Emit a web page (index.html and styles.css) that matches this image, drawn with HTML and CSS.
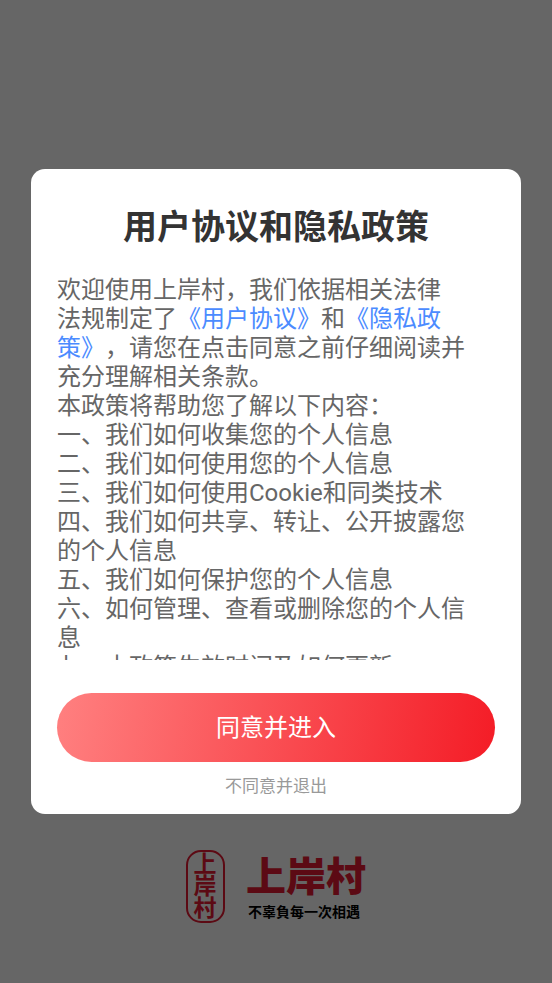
FILE: index.html
```html
<!DOCTYPE html>
<html lang="zh-CN">
<head>
<meta charset="utf-8">
<meta name="viewport" content="width=device-width, initial-scale=1">
<title>上岸村</title>
<link rel="stylesheet" href="styles.css">
</head>
<body>
<div class="splash">
  <svg class="brand" viewBox="0 0 182 76" role="img" aria-label="上岸村 不辜負每一次相遇">
    <rect class="seal" x="2" y="2" width="37" height="71" rx="14"/>
    <g class="seal-text">
      <text x="20" y="23">上</text>
      <text x="20" y="45">岸</text>
      <text x="20" y="67">村</text>
    </g>
    <text class="wordmark" x="61" y="42">上岸村</text>
    <text class="slogan" x="63" y="68">不辜負每一次相遇</text>
  </svg>
</div>
<div class="overlay">
  <main class="dialog" role="dialog" aria-modal="true" aria-labelledby="title">
    <h1 class="title" id="title">用户协议和隐私政策</h1>
    <div class="content">
      <p>欢迎使用上岸村，我们依据相关法律<br>法规制定了<a href="#agreement">《用户协议》</a>和<a href="#privacy">《隐私政<br>策》</a>，请您在点击同意之前仔细阅读并充分理解相关条款。</p>
      <p>本政策将帮助您了解以下内容：</p>
      <p>一、我们如何收集您的个人信息</p>
      <p>二、我们如何使用您的个人信息</p>
      <p>三、我们如何使用Cookie和同类技术</p>
      <p>四、我们如何共享、转让、公开披露您的个人信息</p>
      <p>五、我们如何保护您的个人信息</p>
      <p>六、如何管理、查看或删除您的个人信息</p>
      <p>七、本政策生效时间及如何更新</p>
    </div>
    <button class="accept" type="button">同意并进入</button>
    <button class="decline" type="button">不同意并退出</button>
  </main>
</div>
</body>
</html>
```

FILE: styles.css
```css
* {
  box-sizing: border-box;
}

body {
  margin: 0;
  background: #fff;
  font-family: Roboto, "Noto Sans CJK SC", sans-serif;
  text-spacing-trim: space-all;
}

.splash {
  display: flex;
  justify-content: center;
  align-items: flex-end;
  min-height: 100vh;
  padding-bottom: 58px;
}

.brand {
  width: 182px;
  height: 76px;
  overflow: visible;
  font-family: "Noto Sans CJK SC", sans-serif;
}

.seal {
  fill: none;
  stroke: #e61a32;
  stroke-width: 2;
}

.seal-text {
  fill: #e61a32;
  font-size: 23px;
  font-weight: 700;
  text-anchor: middle;
}

.wordmark {
  fill: #e61a32;
  font-size: 40px;
  font-weight: 900;
}

.slogan {
  fill: #000;
  font-family: "Noto Sans CJK TC", sans-serif;
  font-size: 14px;
  font-weight: 700;
}

.overlay {
  position: fixed;
  inset: 0;
  display: flex;
  align-items: center;
  padding: 0 31px;
  background: rgba(0, 0, 0, 0.6);
}

.dialog {
  display: flex;
  flex-direction: column;
  width: 100%;
  padding: 34px 26px 16px;
  border-radius: 14px;
  background: #fff;
}

.title {
  margin: 0 0 24px;
  color: #333;
  font-size: 34px;
  font-weight: 700;
  line-height: 48px;
  text-align: center;
}

.content {
  max-height: 385px;
  padding-top: 1px;
  padding-right: 20px;
  overflow: hidden;
  color: #666;
  font-size: 24px;
  line-height: 29px;
}

.content p {
  margin: 0;
}

.content a {
  color: #4b8bff;
  text-decoration: none;
}

button {
  border: 0;
  font-family: inherit;
  cursor: pointer;
}

.accept {
  margin-top: 33px;
  padding: 17px 16px 15px;
  border-radius: 35px;
  background: linear-gradient(100deg, #ff8080, #f41c26);
  color: #fff;
  font-size: 24px;
  line-height: 37px;
}

.decline {
  align-self: center;
  margin-top: 12px;
  padding: 0;
  background: none;
  color: #999;
  font-size: 17px;
  line-height: 24px;
}
```
